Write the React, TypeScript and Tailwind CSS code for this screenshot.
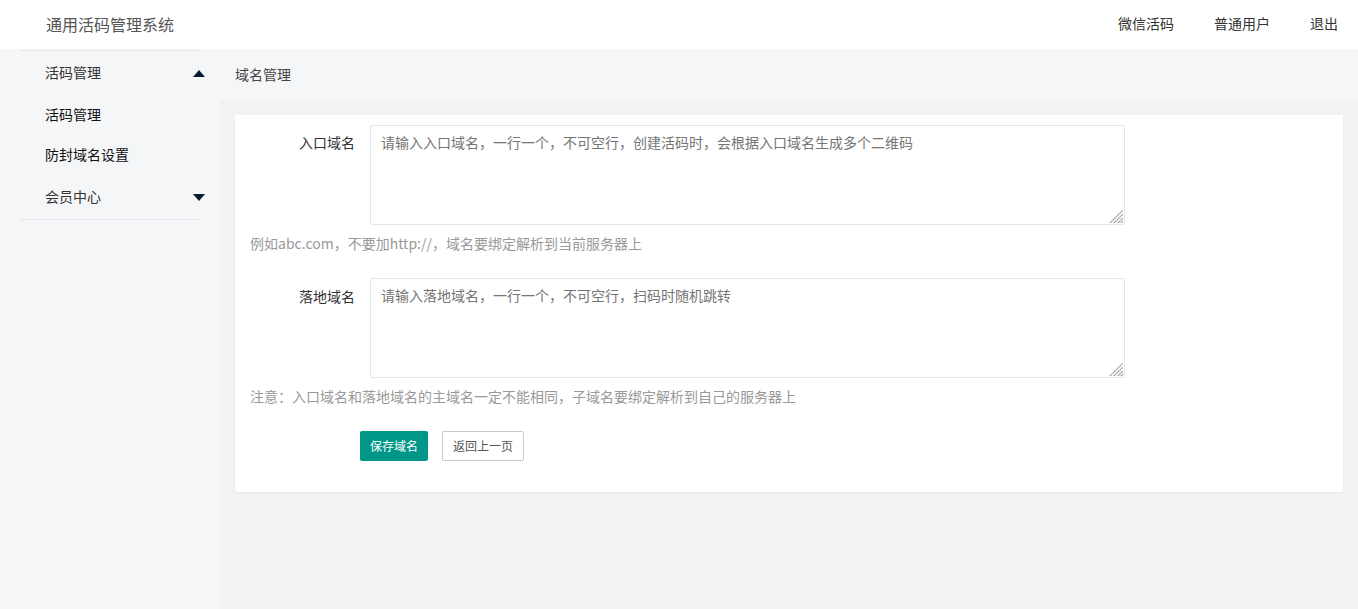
import React from "react";

const font = { fontFamily: '"Noto Sans CJK SC", "Noto Sans", sans-serif' };

function Tri({ up }: { up?: boolean }) {
  return (
    <svg width="12" height="7" viewBox="0 0 12 7" className="block">
      {up ? <polygon points="0,7 12,7 6,0" fill="#0b1a33" /> : <polygon points="0,0 12,0 6,7" fill="#0b1a33" />}
    </svg>
  );
}

function Grip() {
  return (
    <svg width="14" height="14" viewBox="0 0 14 14" className="absolute right-[2px] bottom-[2px] pointer-events-none">
      <g stroke="#8a8a8a" strokeWidth="1.2" strokeDasharray="1.4 0.6">
        <line x1="1" y1="14" x2="14" y2="1" />
        <line x1="5" y1="14" x2="14" y2="5" />
        <line x1="9" y1="14" x2="14" y2="9" />
        <line x1="12" y1="14" x2="14" y2="12" />
      </g>
    </svg>
  );
}

function Area({ placeholder }: { placeholder: string }) {
  return (
    <div className="relative w-[755px] h-[100px]">
      <textarea
        className="block w-[755px] h-[100px] resize-none border border-[#e6e6e6] rounded-[2px] px-[10px] py-[6px] text-[14px] leading-[20px] text-[#333] placeholder:text-[#757575] outline-none"
        placeholder={placeholder}
        style={font}
      />
      <Grip />
    </div>
  );
}

export default function App() {
  return (
    <div className="w-[1358px] h-[609px] flex flex-col bg-[#f5f6f8] overflow-hidden" style={font}>
      <header className="h-[49px] shrink-0 bg-white flex items-center justify-between pb-[2px]">
        <div className="pl-[46px] text-[16px] text-[#555] leading-none">通用活码管理系统</div>
        <nav className="flex items-center text-[14px] text-[#333] pr-[20px] gap-[40px]">
          <span>微信活码</span>
          <span>普通用户</span>
          <span>退出</span>
        </nav>
      </header>
      <div className="flex flex-1 min-h-0">
        <aside className="w-[220px] shrink-0 bg-[#f5f6f8] pt-px">
          <div className="mx-[20px] border-t border-b border-[#e4e6ea]">
            <div className="h-[44px] flex items-center justify-between pl-[25px] pb-[2px] text-[14px] text-[#333]">
              <span>活码管理</span>
              <span className="-mr-[5px] pt-[2px]"><Tri up /></span>
            </div>
            <div className="h-[40px] flex items-center pl-[25px] pb-[2px] text-[14px] text-[#111]">活码管理</div>
            <div className="h-[40px] flex items-center pl-[25px] pb-[2px] text-[14px] text-[#111]">防封域名设置</div>
            <div className="h-[44px] flex items-center justify-between pl-[25px] pb-[2px] text-[14px] text-[#333]">
              <span>会员中心</span>
              <span className="-mr-[5px] pt-[2px]"><Tri /></span>
            </div>
          </div>
        </aside>
        <main className="flex-1 flex flex-col min-w-0">
          <div className="h-[51px] shrink-0 flex items-center pl-[15px] text-[14px] text-[#444] bg-[#f5f6f8]">域名管理</div>
          <div className="flex-1 bg-[#f2f2f2] p-[15px]">
            <div className="bg-white rounded-[2px] shadow-[0_1px_2px_0_rgba(0,0,0,0.05)] px-[15px] pt-[10px] pb-[31px]">
              <div className="flex items-start">
                <label className="w-[120px] shrink-0 pr-[15px] pt-[7px] text-right text-[14px] leading-[20px] text-[#333]">入口域名</label>
                <Area placeholder="请输入入口域名，一行一个，不可空行，创建活码时，会根据入口域名生成多个二维码" />
              </div>
              <div className="mt-[8px] text-[14px] leading-[20px] text-[#999]">例如abc.com，不要加http://，域名要绑定解析到当前服务器上</div>
              <div className="flex items-start mt-[25px]">
                <label className="w-[120px] shrink-0 pr-[15px] pt-[8px] text-right text-[14px] leading-[20px] text-[#333]">落地域名</label>
                <Area placeholder="请输入落地域名，一行一个，不可空行，扫码时随机跳转" />
              </div>
              <div className="mt-[8px] text-[14px] leading-[20px] text-[#999]">注意：入口域名和落地域名的主域名一定不能相同，子域名要绑定解析到自己的服务器上</div>
              <div className="mt-[25px] pl-[110px] flex items-center gap-[14px]">
                <button className="h-[30px] px-[10px] bg-[#009688] text-white text-[12px] rounded-[2px]" style={font}>保存域名</button>
                <button className="h-[30px] px-[10px] bg-white border border-[#c9c9c9] text-[#555] text-[12px] rounded-[2px]" style={font}>返回上一页</button>
              </div>
            </div>
          </div>
        </main>
      </div>
    </div>
  );
}
